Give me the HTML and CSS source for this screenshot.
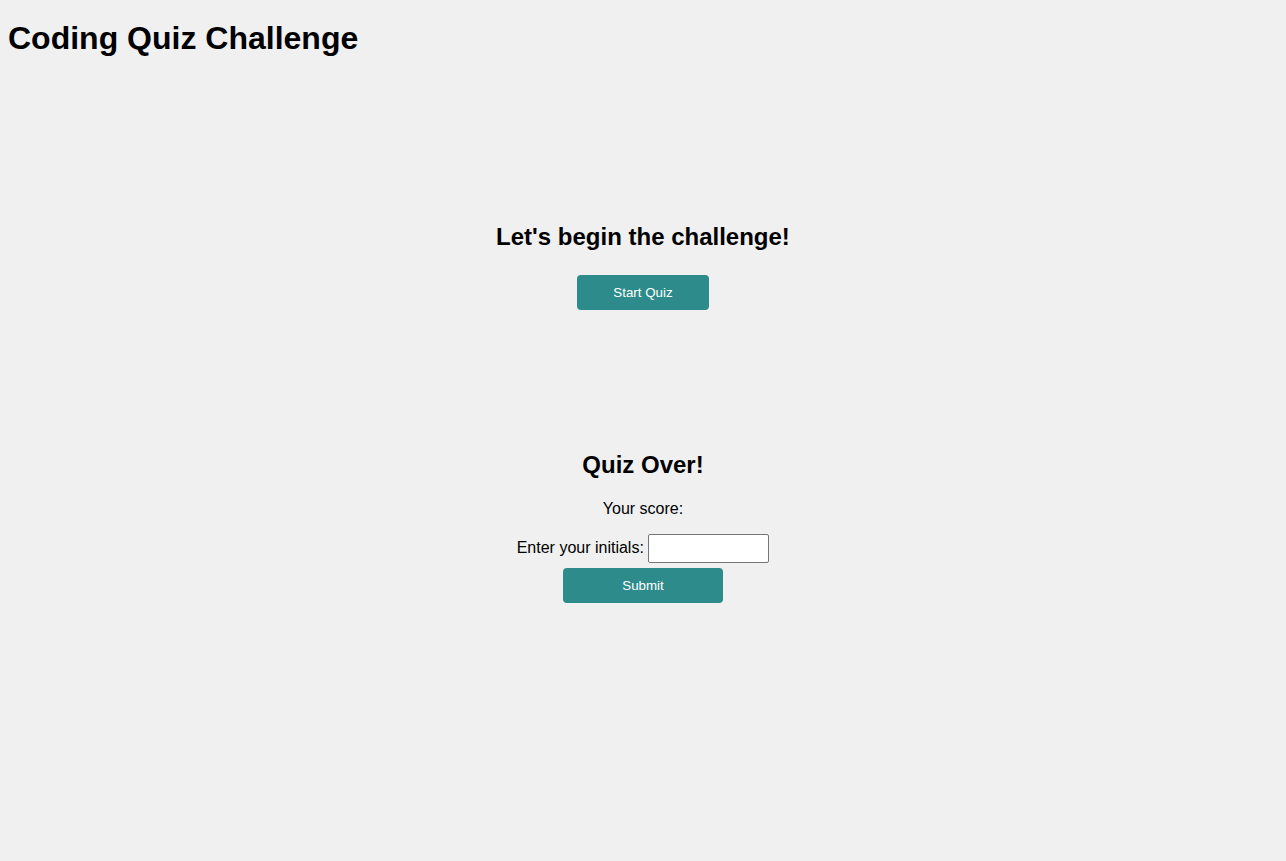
FILE: index.html
```html
<!DOCTYPE html>
<html lang="en">
<head>
<meta charset="utf-8">
<title>Coding Quiz Challenge</title>
<link rel="stylesheet" href="styles.css">
</head>
<body>
<header class="site-header">
  <h1 class="title">Coding Quiz Challenge</h1>
</header>
<main class="quiz">
  <section class="panel panel-start">
    <h2 class="panel-title">Let's begin the challenge!</h2>
    <button class="btn btn-start" type="button">Start Quiz</button>
  </section>
  <section class="panel panel-end">
    <h2 class="panel-title">Quiz Over!</h2>
    <p class="score">Your score: <span class="score-value"></span></p>
    <form class="initials-form">
      <label class="initials-label" for="initials">Enter your initials:</label>
      <input class="initials-input" id="initials" type="text">
      <button class="btn btn-submit" type="button">Submit</button>
    </form>
  </section>
</main>
</body>
</html>
```
FILE: styles.css
```css
html {
  background: #f0f0f0;
}
body {
  margin: 8px;
  background: #f0f0f0;
  color: #000;
  font-family: "Liberation Sans", Arial, sans-serif;
  font-size: 16px;
}
.title {
  font-size: 32px;
  font-weight: bold;
  margin: 12.44px 0 21.44px;
}
.quiz {
  text-align: center;
}
.panel-title {
  font-size: 24px;
  font-weight: bold;
  margin: 0;
}
.panel-start {
  padding-top: 144px;
}
.panel-end {
  padding-top: 141px;
}
.btn {
  font-family: "Liberation Sans", Arial, sans-serif;
  font-size: 13.33px;
  color: #fff;
  background: #2e8b8b;
  border: none;
  border-radius: 4px;
  height: 35px;
  padding: 0;
  cursor: pointer;
}
.btn-start {
  width: 132px;
  margin-top: 24px;
}
.score {
  margin: 21px 0 16px;
}
.initials-form {
  display: block;
}
.initials-label {
  display: inline;
}
.initials-input {
  box-sizing: border-box;
  width: 121px;
  height: 29px;
  border: 1px solid #767676;
  border-radius: 2px;
  background: #fff;
  vertical-align: middle;
  font-size: 16px;
  padding: 1px 2px;
  margin: 0;
}
.btn-submit {
  display: block;
  width: 160px;
  margin: 5px auto 0;
}
```
